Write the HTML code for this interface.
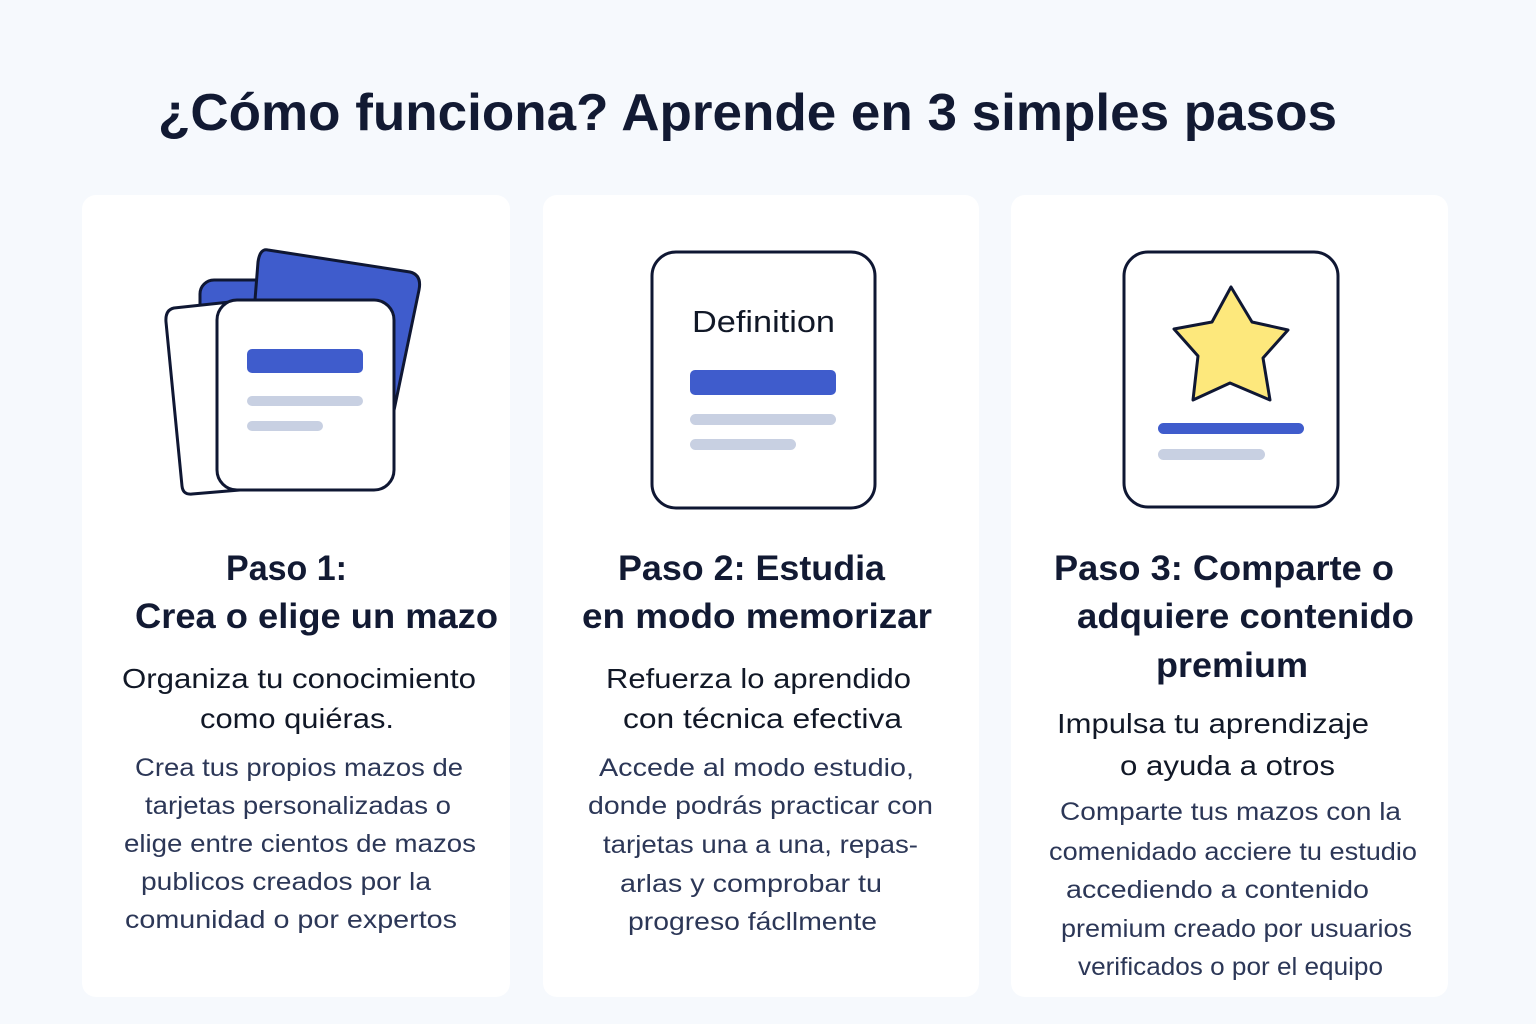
<!DOCTYPE html>
<html><head><meta charset="utf-8"><style>
html,body{margin:0;padding:0;background:#f6f9fd}
svg{display:block}
text{font-family:"Liberation Sans",sans-serif}
.h{font-size:35px;font-weight:bold;fill:#121a33}
.s{font-size:28px;fill:#111827}
.b{font-size:25px;fill:#2c3757}
</style></head><body>
<svg width="1536" height="1024" viewBox="0 0 1536 1024" xmlns="http://www.w3.org/2000/svg">
<rect width="1536" height="1024" fill="#f6f9fd"/>
<text x="158" y="130" font-size="52" font-weight="bold" fill="#121a33" textLength="1179" lengthAdjust="spacingAndGlyphs">¿Cómo funciona? Aprende en 3 simples pasos</text>
<rect x="82" y="195" width="428" height="802" rx="14" fill="#fff"/>
<rect x="543" y="195" width="436" height="802" rx="14" fill="#fff"/>
<rect x="1011" y="195" width="437" height="802" rx="14" fill="#fff"/>

<!-- icon 1 -->
<g stroke="#0f1733" stroke-width="3" stroke-linejoin="round">
<rect x="200" y="280" width="150" height="120" rx="14" fill="#3f5ccc"/>
<path d="M268 250 L410 272 Q422 275 419 290 L392 420 L300 420 L255 300 L258 262 Q260 248 268 250 Z" fill="#3f5ccc"/>
<path d="M174 308 L230 302 L240 490 L192 494 Q183 495 182 486 L166 322 Q165 310 174 308 Z" fill="#fff"/>
<rect x="217" y="300" width="177" height="190" rx="20" fill="#fff"/>
</g>
<rect x="247" y="349" width="116" height="24" rx="5" fill="#3f5ccc"/>
<rect x="247" y="396" width="116" height="10" rx="5" fill="#c8d0e2"/>
<rect x="247" y="421" width="76" height="10" rx="5" fill="#c8d0e2"/>

<!-- icon 2 -->
<rect x="652" y="252" width="223" height="256" rx="24" fill="#fff" stroke="#0f1733" stroke-width="3"/>
<text x="692" y="332" font-size="31" fill="#111827" textLength="143" lengthAdjust="spacingAndGlyphs">Definition</text>
<rect x="690" y="370" width="146" height="25" rx="5" fill="#3f5ccc"/>
<rect x="690" y="414" width="146" height="11" rx="5.5" fill="#c8d0e2"/>
<rect x="690" y="439" width="106" height="11" rx="5.5" fill="#c8d0e2"/>

<!-- icon 3 -->
<rect x="1124" y="252" width="214" height="255" rx="24" fill="#fff" stroke="#0f1733" stroke-width="3"/>
<path d="M1231 287 L1252 322 L1288 330 L1263 358 L1270 400 L1230 383 L1193 400 L1198 356 L1174 329 L1212 322 Z" fill="#fde87c" stroke="#0f1733" stroke-width="3" stroke-linejoin="round"/>
<rect x="1158" y="423" width="146" height="11" rx="5.5" fill="#3f5ccc"/>
<rect x="1158" y="449" width="107" height="11" rx="5.5" fill="#c8d0e2"/>

<!-- card 1 text -->
<text class="h" x="226" y="580" textLength="121" lengthAdjust="spacingAndGlyphs">Paso 1:</text>
<text class="h" x="135" y="628" textLength="363" lengthAdjust="spacingAndGlyphs">Crea o elige un mazo</text>
<text class="s" x="122" y="688" textLength="354" lengthAdjust="spacingAndGlyphs">Organiza tu conocimiento</text>
<text class="s" x="200" y="728" textLength="194" lengthAdjust="spacingAndGlyphs">como quiéras.</text>
<text class="b" x="135" y="776" textLength="328" lengthAdjust="spacingAndGlyphs">Crea tus propios mazos de</text>
<text class="b" x="145" y="814" textLength="306" lengthAdjust="spacingAndGlyphs">tarjetas personalizadas o</text>
<text class="b" x="124" y="852" textLength="352" lengthAdjust="spacingAndGlyphs">elige entre cientos de mazos</text>
<text class="b" x="141" y="890" textLength="290" lengthAdjust="spacingAndGlyphs">publicos creados por la</text>
<text class="b" x="125" y="928" textLength="332" lengthAdjust="spacingAndGlyphs">comunidad o por expertos</text>

<!-- card 2 text -->
<text class="h" x="618" y="580" textLength="267" lengthAdjust="spacingAndGlyphs">Paso 2: Estudia</text>
<text class="h" x="582" y="628" textLength="350" lengthAdjust="spacingAndGlyphs">en modo memorizar</text>
<text class="s" x="606" y="688" textLength="305" lengthAdjust="spacingAndGlyphs">Refuerza lo aprendido</text>
<text class="s" x="623" y="728" textLength="279" lengthAdjust="spacingAndGlyphs">con técnica efectiva</text>
<text class="b" x="599" y="776" textLength="315" lengthAdjust="spacingAndGlyphs">Accede al modo estudio,</text>
<text class="b" x="588" y="814" textLength="345" lengthAdjust="spacingAndGlyphs">donde podrás practicar con</text>
<text class="b" x="603" y="853" textLength="315" lengthAdjust="spacingAndGlyphs">tarjetas una a una, repas-</text>
<text class="b" x="620" y="892" textLength="262" lengthAdjust="spacingAndGlyphs">arlas y comprobar tu</text>
<text class="b" x="628" y="930" textLength="249" lengthAdjust="spacingAndGlyphs">progreso fácllmente</text>

<!-- card 3 text -->
<text class="h" x="1054" y="580" textLength="340" lengthAdjust="spacingAndGlyphs">Paso 3: Comparte o</text>
<text class="h" x="1077" y="628" textLength="337" lengthAdjust="spacingAndGlyphs">adquiere contenido</text>
<text class="h" x="1156" y="677" textLength="152" lengthAdjust="spacingAndGlyphs">premium</text>
<text class="s" x="1057" y="733" textLength="312" lengthAdjust="spacingAndGlyphs">Impulsa tu aprendizaje</text>
<text class="s" x="1120" y="775" textLength="215" lengthAdjust="spacingAndGlyphs">o ayuda a otros</text>
<text class="b" x="1060" y="820" textLength="341" lengthAdjust="spacingAndGlyphs">Comparte tus mazos con la</text>
<text class="b" x="1049" y="860" textLength="368" lengthAdjust="spacingAndGlyphs">comenidado acciere tu estudio</text>
<text class="b" x="1066" y="898" textLength="303" lengthAdjust="spacingAndGlyphs">accediendo a contenido</text>
<text class="b" x="1061" y="937" textLength="351" lengthAdjust="spacingAndGlyphs">premium creado por usuarios</text>
<text class="b" x="1078" y="975" textLength="305" lengthAdjust="spacingAndGlyphs">verificados o por el equipo</text>
</svg>
</body></html>
